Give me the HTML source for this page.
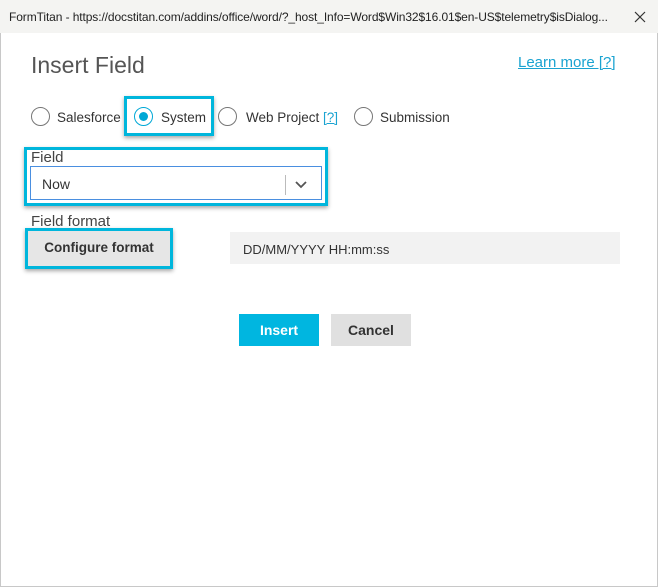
<!DOCTYPE html>
<html><head><style>
*{margin:0;padding:0;box-sizing:border-box}
body{width:658px;height:587px;background:#fff;font-family:"Liberation Sans",sans-serif;position:relative;overflow:hidden}
.a{position:absolute;white-space:nowrap}
.rad{position:absolute;width:19px;height:19px;border:1px solid #777;border-radius:50%;background:#fff}
.hl{position:absolute;border:3px solid #00b6dc;box-shadow:0 2px 4px rgba(0,0,0,.35)}
</style></head><body>
<div class="a" style="left:0;top:0;width:658px;height:587px;border:1px solid #c8c8c8"></div>
<div class="a" style="left:0;top:0;width:658px;height:33px;background:#f4f4f2"></div>
<div class="a" style="left:9px;top:10px;font-size:12px;color:#222;letter-spacing:-0.1px">FormTitan - https://docstitan.com/addins/office/word/?_host_Info=Word$Win32$16.01$en-US$telemetry$isDialog...</div>
<svg class="a" style="left:634px;top:11px" width="12" height="12"><path d="M1 1L11 11M11 1L1 11" stroke="#333" stroke-width="1.2"/></svg>
<div class="a" style="left:31px;top:52px;font-size:23px;color:#555;font-weight:300">Insert Field</div>
<div class="a" style="left:518px;top:54px;font-size:15px;color:#1aa3d1;text-decoration:underline">Learn more [?]</div>

<div class="hl" style="left:124px;top:96px;width:90px;height:40px"></div>
<div class="rad" style="left:31px;top:107px"></div>
<div class="a" style="left:57px;top:110px;font-size:13.5px;color:#333">Salesforce</div>
<div class="rad" style="left:134px;top:107px;border-color:#00a8d6"></div>
<div class="a" style="left:139px;top:112px;width:9px;height:9px;border-radius:50%;background:#00a8d6"></div>
<div class="a" style="left:161px;top:110px;font-size:13.5px;color:#333">System</div>
<div class="rad" style="left:218px;top:107px"></div>
<div class="a" style="left:246px;top:110px;font-size:13.5px;color:#333">Web Project <span style="color:#1aa3d1;text-decoration:underline">[?]</span></div>
<div class="rad" style="left:354px;top:107px"></div>
<div class="a" style="left:380px;top:110px;font-size:13.5px;color:#333">Submission</div>

<div class="hl" style="left:24px;top:147px;width:304px;height:59px"></div>
<div class="a" style="left:31px;top:149px;font-size:15px;color:#444">Field</div>
<div class="a" style="left:30px;top:166px;width:292px;height:34px;border:1px solid #4a8fe0;background:#fff"></div>
<div class="a" style="left:42px;top:176px;font-size:14px;color:#333">Now</div>
<div class="a" style="left:285px;top:175px;width:1px;height:20px;background:#bbb"></div>
<svg class="a" style="left:295px;top:181px" width="12" height="8"><path d="M1 1L6 6L11 1" stroke="#555" stroke-width="1.8" fill="none"/></svg>

<div class="a" style="left:31px;top:213px;font-size:15px;color:#444">Field format</div>
<div class="hl" style="left:25px;top:228px;width:148px;height:41px"></div>
<div class="a" style="left:28px;top:231px;width:142px;height:35px;background:#e6e6e6"></div>
<div class="a" style="left:28px;top:240px;width:142px;text-align:center;font-size:13.5px;font-weight:bold;color:#333">Configure format</div>
<div class="a" style="left:230px;top:232px;width:390px;height:32px;background:#f2f2f2"></div>
<div class="a" style="left:243px;top:242px;font-size:13px;color:#333">DD/MM/YYYY HH:mm:ss</div>

<div class="a" style="left:239px;top:314px;width:80px;height:32px;background:#00b6e0;color:#fff;font-size:14px;font-weight:bold;text-align:center;line-height:32px">Insert</div>
<div class="a" style="left:331px;top:314px;width:80px;height:32px;background:#e0e0e0;color:#333;font-size:14px;font-weight:bold;text-align:center;line-height:32px">Cancel</div>
</body></html>
